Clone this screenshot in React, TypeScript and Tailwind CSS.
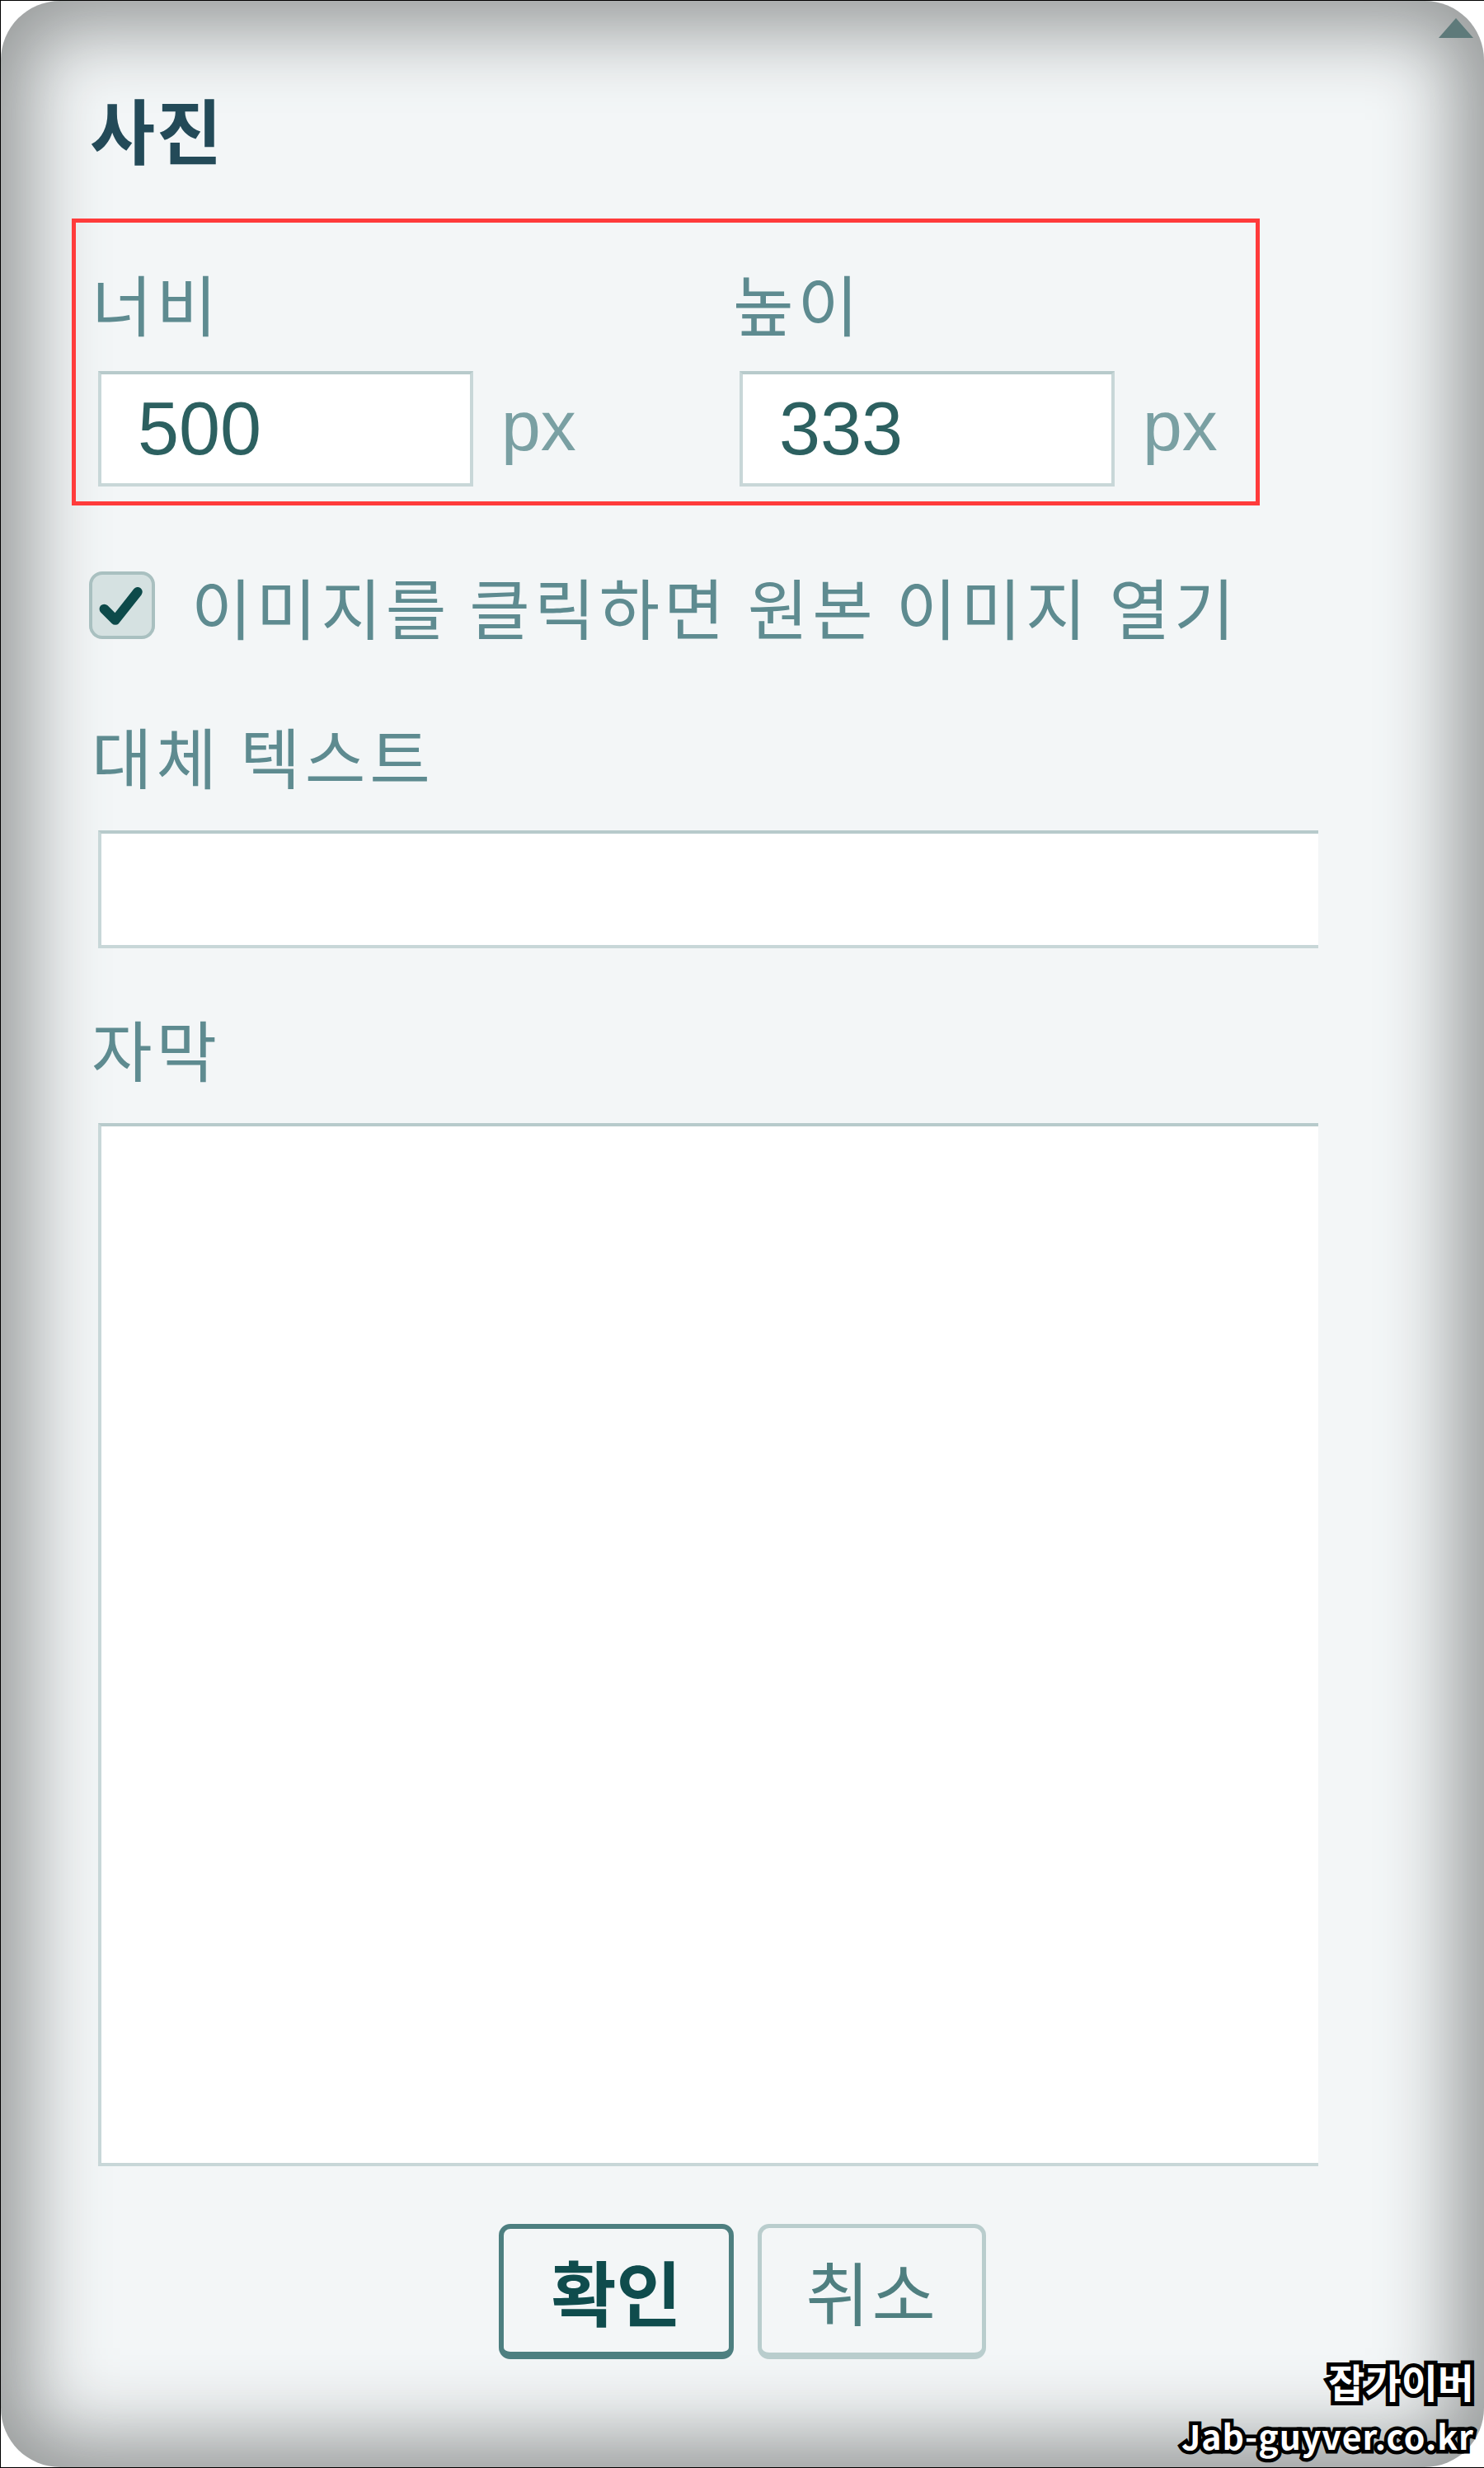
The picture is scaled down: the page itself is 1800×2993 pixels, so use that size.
import React from 'react'

const kr = "font-['Noto_Sans_CJK_KR','Noto_Sans',sans-serif]"
const num = "font-['Liberation_Sans',Arial,sans-serif]"
const label = `${kr} text-[80px] tracking-[5px] leading-none text-[#5e8b90]`

const SizeField = ({ name, value, wide }: { name: string; value: string; wide?: boolean }) => {
  return (
    <div className={`flex flex-col ${wide ? 'w-[778px] shrink-0' : 'flex-1'}`}>
      <span className={label}>{name}</span>
      <div className="flex flex-row items-center mt-[44px] ml-[8px]">
        <input
          readOnly
          defaultValue={value}
          className={`${num} w-[455px] h-[140px] bg-white border-[4px] border-[#c8d7d8] border-t-[#b7cacb] pl-[44px] text-[90px] leading-none text-[#2c6060] outline-none`}
        />
        <span className={`${num} ml-[34px] -mt-[8px] text-[86px] leading-none text-[#7aa0a3]`}>px</span>
      </div>
    </div>
  )
}

const Checkmark = () => (
  <svg width="80" height="82" viewBox="0 0 80 82" className="block">
    <polyline
      points="16,46 31,61 61,23"
      fill="none"
      stroke="#0d4a4a"
      strokeWidth="13"
      strokeLinecap="round"
      strokeLinejoin="round"
    />
  </svg>
)

export default function App() {
  return (
    <div className="relative w-[1800px] h-[2993px] bg-white border-t border-l border-b border-black overflow-hidden">
      <div className="h-full rounded-[72px] bg-[#f3f6f7] shadow-[inset_0_0_90px_36px_#989b9b] flex flex-col pt-[112px]">
        <div className="flex flex-col pl-[86px]">
          <h1 className={`${kr} ml-[22px] text-[86px] tracking-[2px] font-bold leading-none text-[#234a58]`}>사진</h1>

          <div className="mt-[66px] w-[1441px] border-[5px] border-[#ff3b3b] pl-[19px] pt-[56px] pb-[18px] flex flex-row">
            <SizeField name="너비" value="500" wide />
            <SizeField name="높이" value="333" />
          </div>

          <label className="mt-[80px] ml-[21px] flex flex-row items-center">
            <span className="w-[80px] h-[82px] rounded-[16px] border-[4px] border-[#a9c0c0] bg-[#d5e1e1] flex items-center justify-center overflow-hidden">
              <Checkmark />
            </span>
            <span className={`${label} ml-[44px] text-[#5b8b90]`}>이미지를 클릭하면 원본 이미지 열기</span>
          </label>

          <span className={`${label} mt-[100px] ml-[24px] tracking-[3px]`}>대체 텍스트</span>
          <input
            readOnly
            className="mt-[52px] ml-[32px] w-[1480px] h-[143px] bg-white border-[4px] border-r-0 border-[#c8d7d8] border-t-[#b7cacb] outline-none"
          />

          <span className={`${label} mt-[80px] ml-[24px]`}>자막</span>
          <textarea
            readOnly
            className="mt-[52px] ml-[32px] w-[1480px] h-[1265px] bg-white border-[4px] border-r-0 border-[#c8d7d8] border-t-[#b7cacb] outline-none resize-none"
          />
        </div>

        <div className="mt-[70px] flex flex-row justify-center gap-[29px]">
          <button
            className={`${kr} w-[285px] h-[164px] rounded-[14px] border-[6px] border-b-[9px] border-[#4d7f80] bg-[#f3f6f7] text-[86px] font-bold leading-none text-[#0f4c4d]`}
          >
            확인
          </button>
          <button
            className={`${kr} w-[277px] h-[164px] rounded-[14px] border-[5px] border-b-[8px] border-[#b9cdcd] bg-[#f3f6f7] text-[84px] tracking-[3px] leading-none text-[#4f7f80]`}
          >
            취소
          </button>
        </div>
      </div>

      {/* scrollbar arrow */}
      <svg className="absolute left-[1744px] top-[21px]" width="42" height="24" viewBox="0 0 42 24">
        <polygon points="21,0 42,24 0,24" fill="#5e7a7a" />
      </svg>

      {/* watermark */}
      <div className="absolute right-[12px] bottom-[8px] flex flex-col items-end">
        <span
          className={`${kr} text-[48px] font-bold leading-normal text-white [-webkit-text-stroke:10px_#000] [paint-order:stroke_fill]`}
        >
          잡가이버
        </span>
        <span
          className={`${kr} text-[41px] font-bold leading-normal tracking-[1px] text-white [-webkit-text-stroke:9px_#000] [paint-order:stroke_fill]`}
        >
          Jab-guyver.co.kr
        </span>
      </div>
    </div>
  )
}
